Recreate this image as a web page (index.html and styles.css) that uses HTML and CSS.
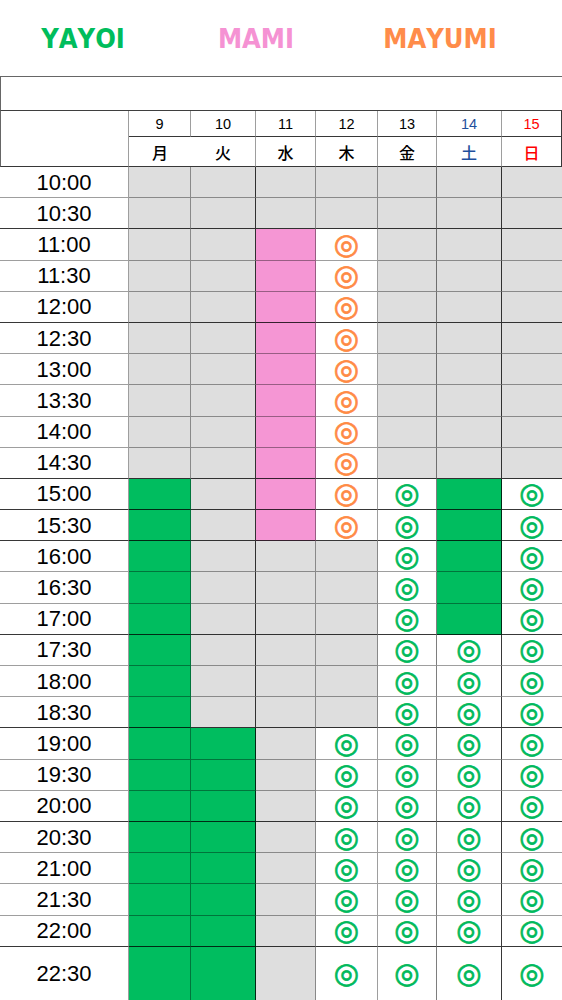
FILE: index.html
```html
<!DOCTYPE html>
<html lang="ja">
<head>
<meta charset="utf-8">
<title>Schedule</title>
<link rel="stylesheet" href="styles.css">
</head>
<body>
<header class="legend">
  <span class="nm yayoi">YAYOI</span>
  <span class="nm mami">MAMI</span>
  <span class="nm mayumi">MAYUMI</span>
</header>
<section class="sched">
  <div class="blank"></div>
  <div class="head">
    <div class="corner"></div>
    <div class="num">9</div><div class="num">10</div><div class="num">11</div><div class="num">12</div><div class="num">13</div><div class="num sat">14</div><div class="num sun">15</div>
    <div class="day">月</div><div class="day">火</div><div class="day">水</div><div class="day">木</div><div class="day">金</div><div class="day sat">土</div><div class="day sun">日</div>
  </div>

  <div class="row"><div class="t">10:00</div><div class="g"></div><div class="g"></div><div class="g"></div><div class="g"></div><div class="g"></div><div class="g"></div><div class="g"></div></div>
  <div class="row dk"><div class="t">10:30</div><div class="g"></div><div class="g"></div><div class="g"></div><div class="g"></div><div class="g"></div><div class="g"></div><div class="g"></div></div>
  <div class="row"><div class="t">11:00</div><div class="g"></div><div class="g"></div><div class="p"></div><div class="o">◎</div><div class="g"></div><div class="g"></div><div class="g"></div></div>
  <div class="row"><div class="t">11:30</div><div class="g"></div><div class="g"></div><div class="p"></div><div class="o">◎</div><div class="g"></div><div class="g"></div><div class="g"></div></div>
  <div class="row dk"><div class="t">12:00</div><div class="g"></div><div class="g"></div><div class="p"></div><div class="o">◎</div><div class="g"></div><div class="g"></div><div class="g"></div></div>
  <div class="row"><div class="t">12:30</div><div class="g"></div><div class="g"></div><div class="p"></div><div class="o">◎</div><div class="g"></div><div class="g"></div><div class="g"></div></div>
  <div class="row"><div class="t">13:00</div><div class="g"></div><div class="g"></div><div class="p"></div><div class="o">◎</div><div class="g"></div><div class="g"></div><div class="g"></div></div>
  <div class="row"><div class="t">13:30</div><div class="g"></div><div class="g"></div><div class="p"></div><div class="o">◎</div><div class="g"></div><div class="g"></div><div class="g"></div></div>
  <div class="row"><div class="t">14:00</div><div class="g"></div><div class="g"></div><div class="p"></div><div class="o">◎</div><div class="g"></div><div class="g"></div><div class="g"></div></div>
  <div class="row dk"><div class="t">14:30</div><div class="g"></div><div class="g"></div><div class="p"></div><div class="o">◎</div><div class="g"></div><div class="g"></div><div class="g"></div></div>
  <div class="row dk"><div class="t">15:00</div><div class="G"></div><div class="g"></div><div class="p"></div><div class="o">◎</div><div class="c">◎</div><div class="G"></div><div class="c">◎</div></div>
  <div class="row dk"><div class="t">15:30</div><div class="G"></div><div class="g"></div><div class="p"></div><div class="o">◎</div><div class="c">◎</div><div class="G"></div><div class="c">◎</div></div>
  <div class="row"><div class="t">16:00</div><div class="G"></div><div class="g"></div><div class="g"></div><div class="g"></div><div class="c">◎</div><div class="G"></div><div class="c">◎</div></div>
  <div class="row"><div class="t">16:30</div><div class="G"></div><div class="g"></div><div class="g"></div><div class="g"></div><div class="c">◎</div><div class="G"></div><div class="c">◎</div></div>
  <div class="row dk"><div class="t">17:00</div><div class="G"></div><div class="g"></div><div class="g"></div><div class="g"></div><div class="c">◎</div><div class="G"></div><div class="c">◎</div></div>
  <div class="row"><div class="t">17:30</div><div class="G"></div><div class="g"></div><div class="g"></div><div class="g"></div><div class="c">◎</div><div class="c">◎</div><div class="c">◎</div></div>
  <div class="row"><div class="t">18:00</div><div class="G"></div><div class="g"></div><div class="g"></div><div class="g"></div><div class="c">◎</div><div class="c">◎</div><div class="c">◎</div></div>
  <div class="row dk"><div class="t">18:30</div><div class="G"></div><div class="g"></div><div class="g"></div><div class="g"></div><div class="c">◎</div><div class="c">◎</div><div class="c">◎</div></div>
  <div class="row"><div class="t">19:00</div><div class="G"></div><div class="G"></div><div class="g"></div><div class="c">◎</div><div class="c">◎</div><div class="c">◎</div><div class="c">◎</div></div>
  <div class="row"><div class="t">19:30</div><div class="G"></div><div class="G"></div><div class="g"></div><div class="c">◎</div><div class="c">◎</div><div class="c">◎</div><div class="c">◎</div></div>
  <div class="row dk"><div class="t">20:00</div><div class="G"></div><div class="G"></div><div class="g"></div><div class="c">◎</div><div class="c">◎</div><div class="c">◎</div><div class="c">◎</div></div>
  <div class="row"><div class="t">20:30</div><div class="G"></div><div class="G"></div><div class="g"></div><div class="c">◎</div><div class="c">◎</div><div class="c">◎</div><div class="c">◎</div></div>
  <div class="row"><div class="t">21:00</div><div class="G"></div><div class="G"></div><div class="g"></div><div class="c">◎</div><div class="c">◎</div><div class="c">◎</div><div class="c">◎</div></div>
  <div class="row"><div class="t">21:30</div><div class="G"></div><div class="G"></div><div class="g"></div><div class="c">◎</div><div class="c">◎</div><div class="c">◎</div><div class="c">◎</div></div>
  <div class="row dk"><div class="t">22:00</div><div class="G"></div><div class="G"></div><div class="g"></div><div class="c">◎</div><div class="c">◎</div><div class="c">◎</div><div class="c">◎</div></div>
  <div class="row last"><div class="t">22:30</div><div class="G"></div><div class="G"></div><div class="g"></div><div class="c">◎</div><div class="c">◎</div><div class="c">◎</div><div class="c">◎</div></div>
</section>
</body>
</html>
```

FILE: styles.css
```css
:root {
  --cols: 129px 62px 65px 60px 62px 59px 65px 60px;
  --line: rgba(0, 0, 0, 0.38);
  --line-dk: rgba(0, 0, 0, 0.78);
  --gray: #dedede;
  --pink: #f596d4;
  --green: #00bd5f;
  --orange: #ff8a44;
}

html, body {
  margin: 0;
  padding: 0;
  background: #fff;
}

body {
  width: 562px;
  height: 1000px;
  overflow: hidden;
  font-family: "Liberation Sans", Arial, sans-serif;
  color: #000;
}

.legend {
  height: 76px;
  display: grid;
  grid-template-columns: 166px 180px 188px;
  align-items: center;
  box-sizing: border-box;
}

.nm {
  text-align: center;
  font-family: "DejaVu Sans Condensed", "DejaVu Sans", sans-serif;
  font-stretch: condensed;
  font-weight: 700;
  font-size: 27px;
  font-kerning: none;
  line-height: 1;
}

.yayoi { color: #00bd5c; }
.mami { color: #f592d3; }
.mayumi { color: #ff8c4a; }

.sched {
  border-top: 1px solid rgba(0, 0, 0, 0.6);
}

.blank {
  height: 34px;
  box-sizing: border-box;
  border-left: 1px solid rgba(0, 0, 0, 0.6);
  border-bottom: 1px solid rgba(0, 0, 0, 0.75);
}

.head {
  display: grid;
  grid-template-columns: var(--cols);
  grid-template-rows: 26px 30px;
}

.head > div {
  box-sizing: border-box;
  border-right: 1px solid var(--line);
  display: flex;
  align-items: center;
  justify-content: center;
}

.corner {
  grid-row: span 2;
  border-left: 1px solid rgba(0, 0, 0, 0.6);
  border-bottom: 1px solid var(--line-dk);
}

.num {
  font-size: 14.5px;
  border-bottom: 1px solid var(--line-dk);
  padding-top: 1px;
}

.day {
  font-family: "Noto Sans CJK JP", sans-serif;
  font-weight: 500;
  font-size: 16px;
  border-bottom: 1px solid var(--line-dk);
}

.head > div:nth-child(8),
.head > div:nth-child(15) {
  border-right-color: var(--line-dk);
}

.head > div:nth-child(9),
.head > div:nth-child(16) {
  border-right: none;
}

.sat { color: #1f4f9c; }
.sun { color: #ff0000; }

.row {
  display: grid;
  grid-template-columns: var(--cols);
  height: 31.2px;
}

.row.last {
  height: 54px;
}

.row > div {
  box-sizing: border-box;
  border-right: 1px solid var(--line);
  border-bottom: 1px solid var(--line);
  display: flex;
  align-items: center;
  justify-content: center;
}

.row > div:nth-child(3) { border-right-color: var(--line-dk); }
.row > div:nth-child(6) { border-right-color: rgba(0, 0, 0, 0.5); }
.row > div:nth-child(7) { border-right-color: var(--line-dk); }
.row > div:nth-child(8) { border-right: none; }

.row.dk > div { border-bottom-color: var(--line-dk); }

.t {
  font-size: 22px;
  background: #fff;
  padding-top: 1px;
}

.g { background: var(--gray); }
.G { background: var(--green); }
.p { background: var(--pink); }

.o, .c {
  font-family: "DejaVu Sans", sans-serif;
  font-size: 29px;
  line-height: 1;
  -webkit-text-stroke: 0.7px currentColor;
}

.o { color: var(--orange); }
.c { color: #00b95c; }
```
